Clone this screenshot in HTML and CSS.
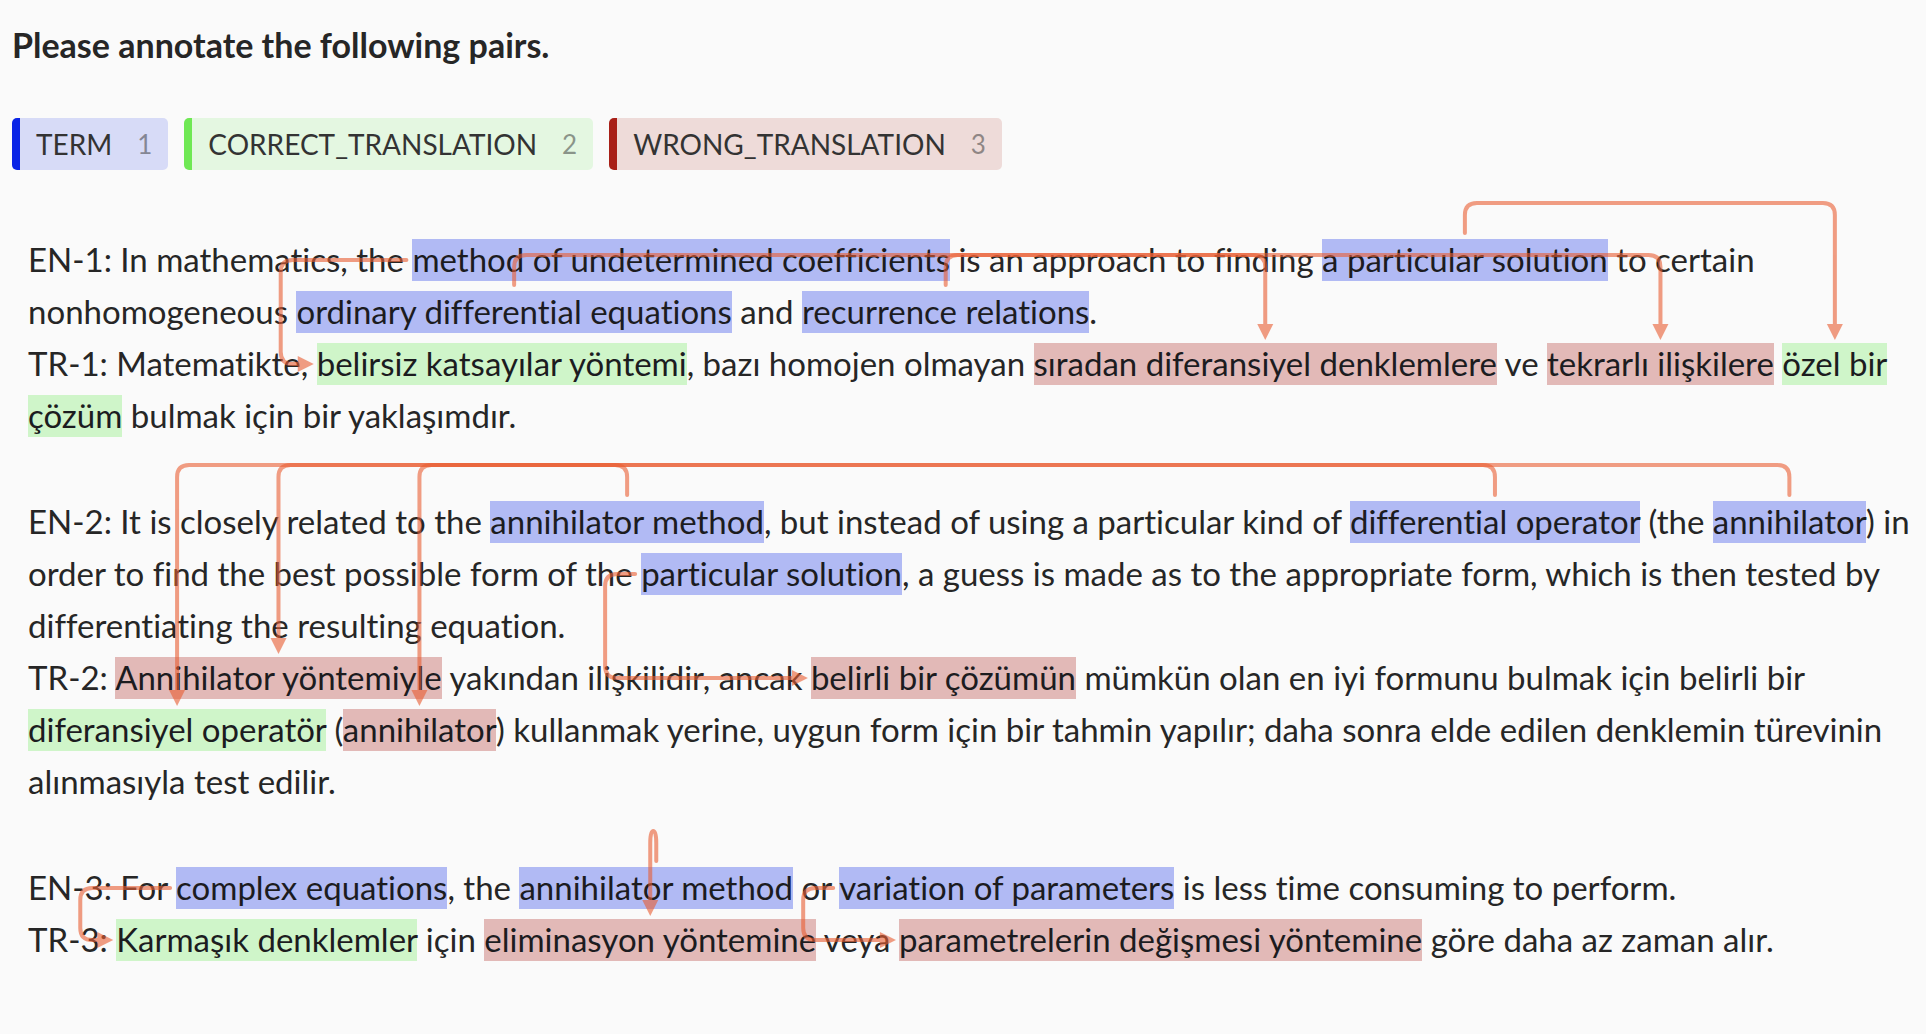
FILE: index.html
```html
<!DOCTYPE html>
<html lang="en">
<head>
<meta charset="utf-8">
<title>Annotation</title>
<link rel="stylesheet" href="styles.css">
</head>
<body>
<main class="task">
  <h1 class="title">Please annotate the following pairs.</h1>

  <div class="labels">
    <button type="button" class="label label-term">TERM<span class="hotkey">1</span></button>
    <button type="button" class="label label-correct">CORRECT_TRANSLATION<span class="hotkey">2</span></button>
    <button type="button" class="label label-wrong">WRONG_TRANSLATION<span class="hotkey">3</span></button>
  </div>

  <div class="document" id="document">
    <div class="pair">
      <p>EN-1: In mathematics, the <mark class="term" data-to="t1" data-route="side">method of undetermined coefficients</mark> is an approach to finding <mark class="term" data-to="t4">a particular solution</mark> to certain nonhomogeneous <mark class="term" data-to="t2">ordinary differential equations</mark> and <mark class="term" data-to="t3">recurrence relations</mark>.</p>
      <p lang="tr">TR-1: Matematikte, <mark class="correct" id="t1">belirsiz katsayılar yöntemi</mark>, bazı homojen olmayan <mark class="wrong" id="t2">sıradan diferansiyel denklemlere</mark> ve <mark class="wrong" id="t3">tekrarlı ilişkilere</mark> <mark class="correct" id="t4">özel bir çözüm</mark> bulmak için bir yaklaşımdır.</p>
    </div>
    <div class="pair">
      <p>EN-2: It is closely related to the <mark class="term" data-to="t5">annihilator method</mark>, but instead of using a particular kind of <mark class="term" data-to="t7">differential operator</mark> (the <mark class="term" data-to="t8">annihilator</mark>) in order to find the best possible form of the <mark class="term" data-to="t6" data-route="side">particular solution</mark>, a guess is made as to the appropriate form, which is then tested by differentiating the resulting equation.</p>
      <p lang="tr">TR-2: <mark class="wrong" id="t5">Annihilator yöntemiyle</mark> yakından ilişkilidir, ancak <mark class="wrong" id="t6">belirli bir çözümün</mark> mümkün olan en iyi formunu bulmak için belirli bir <mark class="correct" id="t7">diferansiyel operatör</mark> (<mark class="wrong" id="t8">annihilator</mark>) kullanmak yerine, uygun form için bir tahmin yapılır; daha sonra elde edilen denklemin türevinin alınmasıyla test edilir.</p>
    </div>
    <div class="pair">
      <p>EN-3: For <mark class="term" data-to="t9" data-route="side">complex equations</mark>, the <mark class="term" data-to="t10">annihilator method</mark> or <mark class="term" data-to="t11" data-route="side">variation of parameters</mark> is less time consuming to perform.</p>
      <p lang="tr">TR-3: <mark class="correct" id="t9">Karmaşık denklemler</mark> için <mark class="wrong" id="t10">eliminasyon yöntemine</mark> veya <mark class="wrong" id="t11">parametrelerin değişmesi yöntemine</mark> göre daha az zaman alır.</p>
    </div>
    <svg class="relations" id="relations" aria-hidden="true"></svg>
  </div>
</main>
<script src="relations.js"></script>
</body>
</html>
```
FILE: styles.css
```css
* {
  box-sizing: border-box;
}

body {
  margin: 0;
  background: #fafafa;
  color: #262626;
  font-family: Lato, "Open Sans", sans-serif;
  font-variant-ligatures: none;
}

.task {
  padding: 25px 8px 24px 12px;
}

.title {
  margin: 0 0 53px;
  font-size: 34px;
  line-height: 40px;
  font-weight: 700;
}

.labels {
  display: flex;
  flex-wrap: wrap;
  gap: 16px;
  margin-bottom: 63px;
}

.label {
  display: flex;
  align-items: center;
  gap: 25px;
  height: 52px;
  padding: 0 16px;
  border: 0;
  border-left: 8px solid;
  border-radius: 5px;
  font-family: inherit;
  font-size: 28px;
  line-height: 32px;
}

.label-term {
  border-color: #0a24e6;
  background: #d7dbf7;
  color: #333;
}

.label-correct {
  border-color: #6fe854;
  background: #e4f7e1;
  color: #333;
}

.label-wrong {
  border-color: #a82018;
  background: #eedbd9;
  color: #333;
}

.hotkey {
  font-size: 26px;
  opacity: 0.5;
}

.document {
  position: relative;
  display: flex;
  flex-direction: column;
  gap: 54px;
  padding-left: 16px;
  font-size: 33px;
  line-height: 52px;
}

.pair p {
  margin: 0;
}

mark {
  padding-bottom: 2px;
  color: #1c1c1f;
}

.term {
  background: #b1baf4;
}

.correct {
  background: #cff5c9;
}

.wrong {
  background: #e2b9b7;
}

.relations {
  position: absolute;
  top: 0;
  left: 0;
  width: 100%;
  height: 100%;
  overflow: visible;
  pointer-events: none;
}

.relation {
  opacity: 0.6;
}

.relation-line {
  fill: none;
  stroke: #e95d32;
  stroke-width: 4px;
  stroke-linecap: round;
}

.relation-head {
  fill: #e95d32;
}
```
FILE: relations.js
```javascript
// Draws an arrow from each marked term to its marked translation.
const GAP = 4;      // space between a mark and the end of its arrow
const REACH = 36;   // how far the connector stands off the marks
const RADIUS = 12;
const HEAD = 16;

const SVG = "http://www.w3.org/2000/svg";
const layer = document.getElementById("relations");

function firstBox(el) {
  const origin = layer.getBoundingClientRect();
  const r = el.getClientRects()[0];
  return {
    left: r.left - origin.left,
    top: r.top - origin.top,
    cx: r.left - origin.left + r.width / 2,
    cy: r.top - origin.top + r.height / 2
  };
}

function sideRoute(a, b) {
  const x = Math.min(a.left, b.left) - REACH;
  const tip = b.left - GAP + 1;
  return {
    line: `M${a.left - GAP - 2} ${a.cy} H${x + RADIUS} Q${x} ${a.cy} ${x} ${a.cy + RADIUS}` +
      ` V${b.cy - RADIUS} Q${x} ${b.cy} ${x + RADIUS} ${b.cy} H${tip - HEAD + 1}`,
    head: `M${tip} ${b.cy} l${-HEAD} -8 v16 z`
  };
}

function topRoute(a, b) {
  const y = Math.min(a.top, b.top) - REACH;
  const dir = b.cx > a.cx ? 1 : -1;
  const r = Math.min(RADIUS, Math.abs(b.cx - a.cx) / 2);
  const tip = b.top - GAP + 1;
  return {
    line: `M${a.cx} ${a.top - GAP - 2} V${y + RADIUS} Q${a.cx} ${y} ${a.cx + dir * r} ${y}` +
      ` H${b.cx - dir * r} Q${b.cx} ${y} ${b.cx} ${y + RADIUS} V${tip - HEAD}`,
    head: `M${b.cx} ${tip} l-8 ${-HEAD} h16 z`
  };
}

function shape(name, d) {
  const path = document.createElementNS(SVG, "path");
  path.setAttribute("class", name);
  path.setAttribute("d", d);
  return path;
}

function draw() {
  layer.replaceChildren();
  document.querySelectorAll("[data-to]").forEach(source => {
    const a = firstBox(source);
    const b = firstBox(document.getElementById(source.dataset.to));
    const route = source.dataset.route === "side" ? sideRoute(a, b) : topRoute(a, b);
    const group = document.createElementNS(SVG, "g");
    group.setAttribute("class", "relation");
    group.append(shape("relation-line", route.line), shape("relation-head", route.head));
    layer.append(group);
  });
}

draw();
window.addEventListener("resize", draw);
```
